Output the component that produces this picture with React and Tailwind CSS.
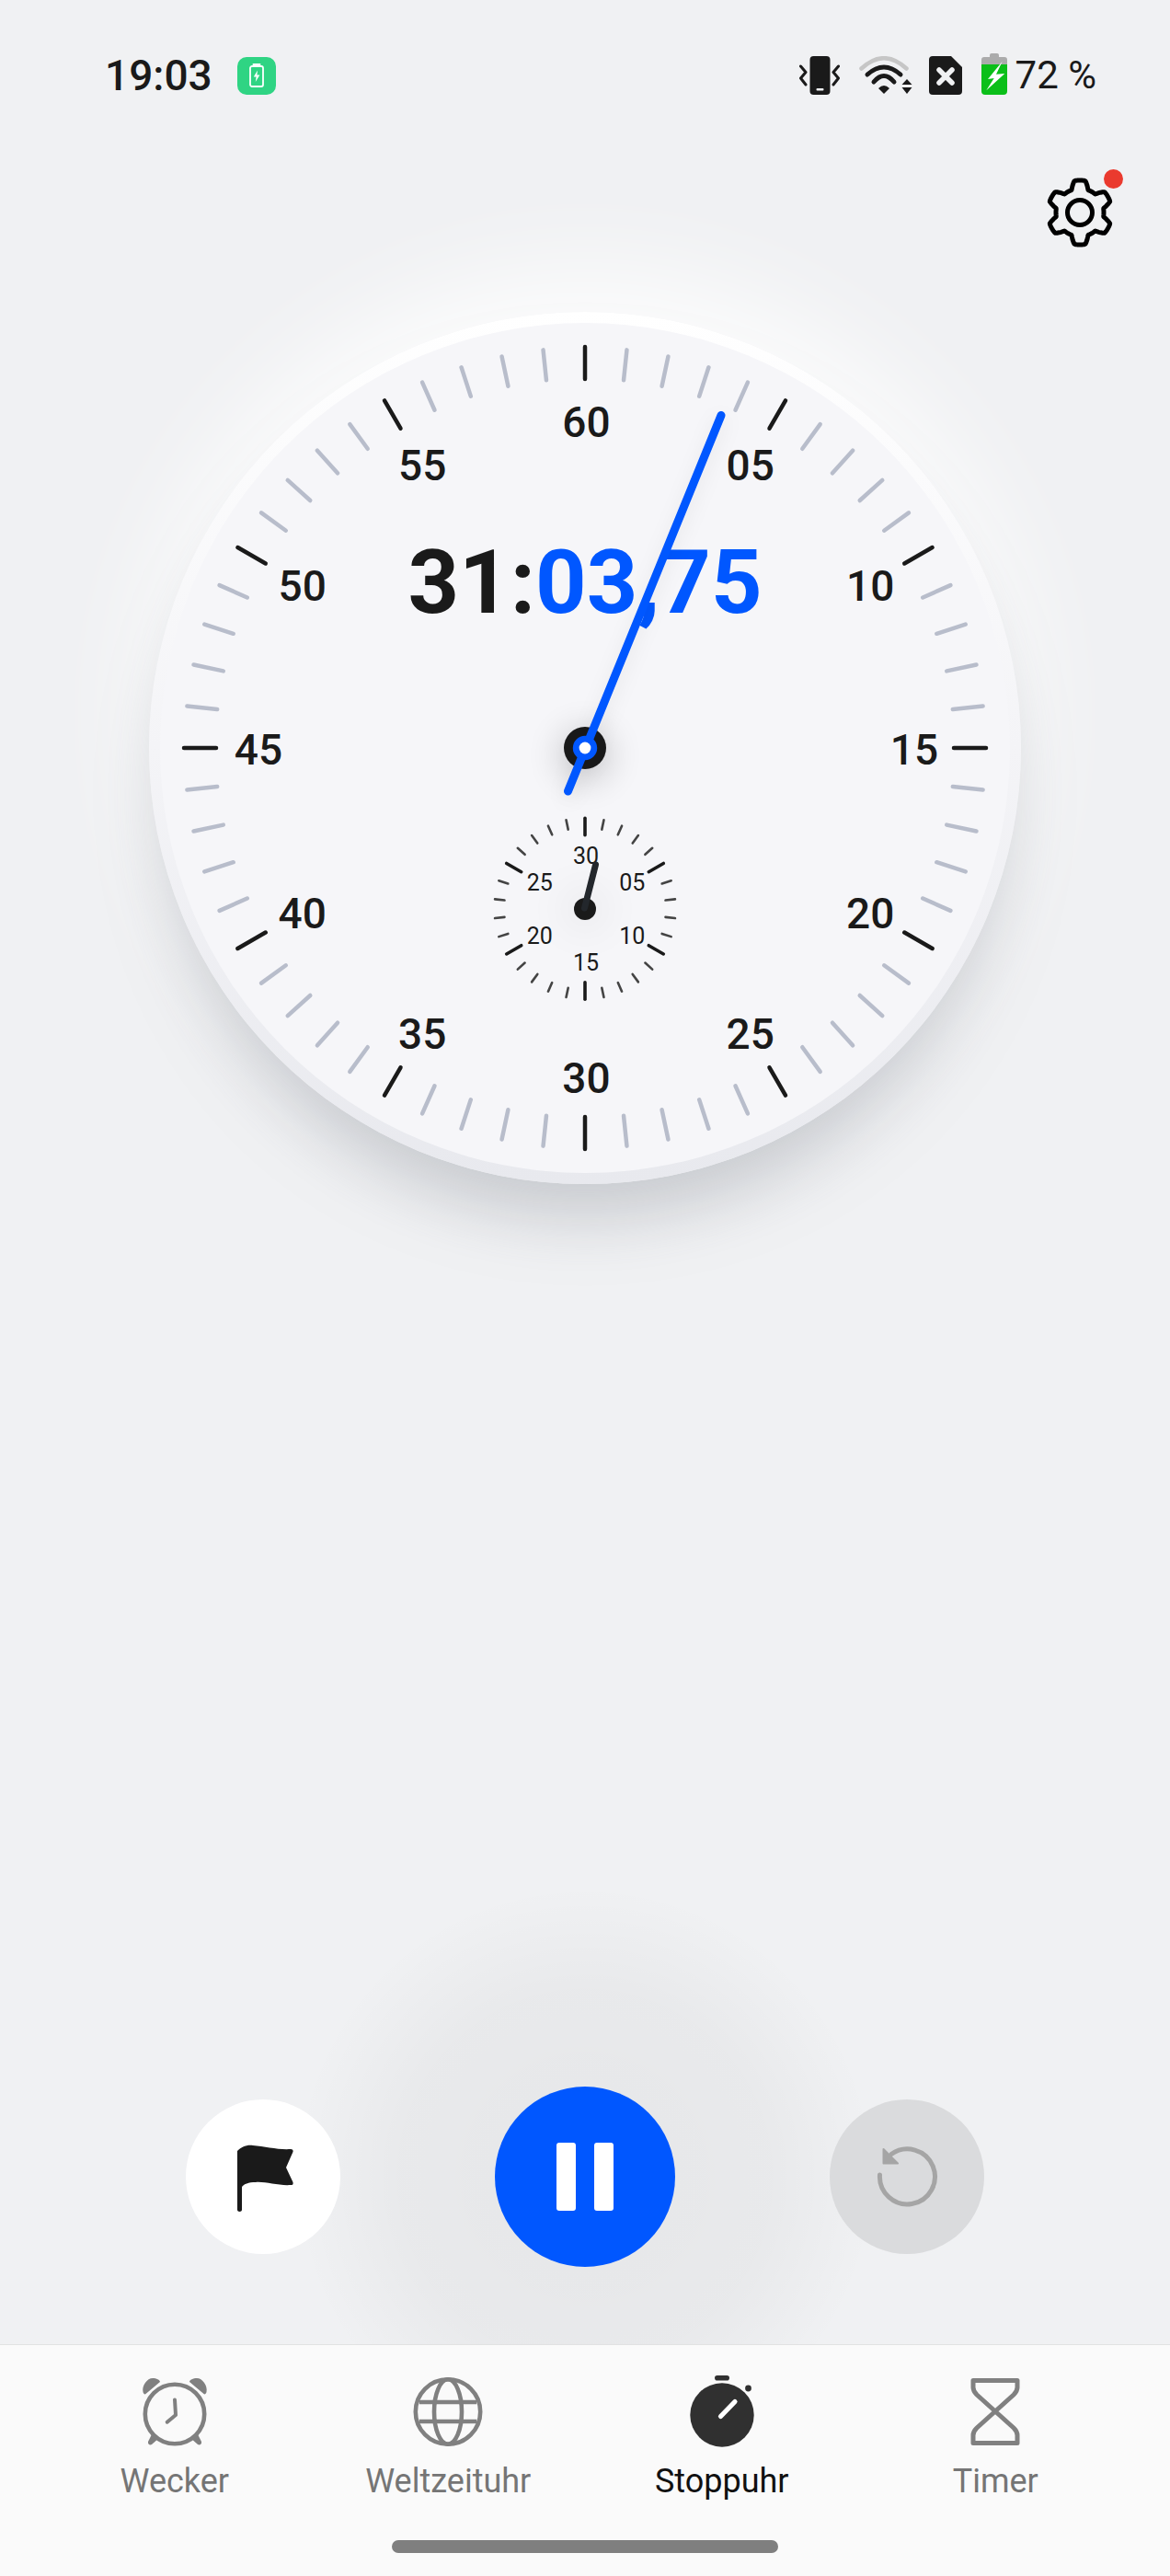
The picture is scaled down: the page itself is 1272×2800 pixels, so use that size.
import React from 'react'

const INK = '#1a1a1a'
const BLUE = '#0057ff'
const MUTED = '#808080'

// dial geometry, in dial-local pixels (948 box, hub at 474/474)
const C = 474
const SUB_Y = 648.7

function polar(cx, cy, r, deg) {
  const a = (deg * Math.PI) / 180
  return [cx + r * Math.sin(a), cy - r * Math.cos(a)]
}

const mainTicks = Array.from({ length: 60 }, (_, i) => {
  const major = i % 5 === 0
  const [x1, y1] = polar(C, C, major ? 401 : 402, i * 6)
  const [x2, y2] = polar(C, C, major ? 436 : 435, i * 6)
  return { x1, y1, x2, y2, major }
})

const subTicks = Array.from({ length: 30 }, (_, i) => {
  const major = i % 5 === 0
  const [x1, y1] = polar(C, SUB_Y, major ? 80 : 88, i * 12)
  const [x2, y2] = polar(C, SUB_Y, 98.5, i * 12)
  return { x1, y1, x2, y2, major }
})

const mainLabels = ['60', '05', '10', '15', '20', '25', '30', '35', '40', '45', '50', '55'].map((t, i) => {
  const [x, y] = polar(C + 1.5, C + 2, 356.5, i * 30)
  return { t, x, y }
})

const subLabels = ['30', '05', '10', '15', '20', '25'].map((t, i) => {
  const [x, y] = polar(C, SUB_Y, 58, i * 60)
  return { t, x, y }
})

function gearPath() {
  const pts = []
  for (let i = 0; i < 360; i += 2) {
    const a = (i * Math.PI) / 180
    const w = Math.max(-1, Math.min(1, Math.cos(6 * a + Math.PI) * -1.9))
    const r = 30.5 + 4.5 * w
    pts.push(`${(40 + r * Math.sin(a)).toFixed(2)} ${(40 - r * Math.cos(a)).toFixed(2)}`)
  }
  return `M${pts.join('L')}Z`
}

function GearIcon() {
  return (
    <svg width="80" height="80" viewBox="0 0 80 80" fill="none">
      <path d={gearPath()} stroke="#000" strokeWidth="5" strokeLinejoin="round" />
      <circle cx="40" cy="40" r="13.5" stroke="#000" strokeWidth="5" />
    </svg>
  )
}

function VibrateIcon() {
  return (
    <svg width="44" height="42" viewBox="0 0 44 42" fill="none">
      <rect x="11.5" y="0" width="22" height="42" rx="4" fill={INK} />
      <rect x="18.5" y="35" width="8" height="2.6" rx="1" fill="#f0f1f3" />
      <path d="M1.5 11 L7 17.5 L1.5 24 L7 31" stroke={INK} strokeWidth="3" strokeLinecap="round" strokeLinejoin="round" />
      <path d="M42.5 11 L37 17.5 L42.5 24 L37 31" stroke={INK} strokeWidth="3" strokeLinecap="round" strokeLinejoin="round" />
    </svg>
  )
}

function WifiIcon() {
  return (
    <svg width="59" height="42" viewBox="0 0 59 42" fill="none">
      <path d="M3.5 13.5 Q28 -9 52.5 13.5" stroke="#c6c6c6" strokeWidth="4.5" strokeLinecap="round" />
      <path d="M10 20 Q28 4 46 20" stroke={INK} strokeWidth="5" strokeLinecap="round" />
      <path d="M17 28 Q28 15 39 28" stroke={INK} strokeWidth="5" strokeLinecap="round" />
      <path d="M22 35 Q28 29 34 35 L28 41Z" fill={INK} />
      <path d="M47.5 31 L53 25 L58.5 31Z" fill={INK} />
      <path d="M47.5 34 H58.5 L53 41Z" fill={INK} />
    </svg>
  )
}

function SimIcon() {
  return (
    <svg width="36" height="42" viewBox="0 0 36 42" fill="none">
      <path d="M4 0 H24 L36 12 V38 A4 4 0 0 1 32 42 H4 A4 4 0 0 1 0 38 V4 A4 4 0 0 1 4 0Z" fill={INK} />
      <path d="M11 15 L25 29 M25 15 L11 29" stroke="#f0f1f3" strokeWidth="5.5" strokeLinecap="round" />
    </svg>
  )
}

function BatteryIcon() {
  return (
    <svg width="28" height="45" viewBox="0 0 28 45" fill="none">
      <path d="M3 4 H9 V2 A2 2 0 0 1 11 0 H17 A2 2 0 0 1 19 2 V4 H25 A3 3 0 0 1 28 7 V12 H0 V7 A3 3 0 0 1 3 4Z" fill="#ababab" />
      <path d="M0 12 H28 V41 A4 4 0 0 1 24 45 H4 A4 4 0 0 1 0 41Z" fill="#0bbf19" />
      <path d="M22.7 8.7 L7 28 L13.7 27 L5.3 40.3 L25.3 22 L16 22.7Z" fill="#fff" />
    </svg>
  )
}

function ChargeBadge() {
  return (
    <div className="w-[42px] h-[41px] rounded-[10px] bg-[#2fd483] flex items-center justify-center">
      <svg width="20" height="26" viewBox="0 0 20 26" fill="none">
        <path d="M6.5 1 H13.5" stroke="#fff" strokeWidth="2" strokeLinecap="round" />
        <rect x="3" y="3" width="14" height="22" rx="2" stroke="#fff" strokeWidth="1.8" />
        <path d="M11 7.5 L6.8 14.5 H9.6 L8.8 20 L13.4 12.5 H10.4Z" fill="#fff" />
      </svg>
    </div>
  )
}

function AlarmIcon() {
  return (
    <svg width="80" height="80" viewBox="0 0 80 80" fill="none">
      <g transform="translate(3 4)">
        <circle cx="37" cy="39" r="32.2" stroke={MUTED} strokeWidth="4.6" />
        <path d="M2.5 15 C1 8 7 0 13 0 C17 0 21 2 21 4 L5.5 17 C4.5 18 3 17 2.5 15Z" fill={MUTED} />
        <path d="M71.5 15 C73 8 67 0 61 0 C57 0 53 2 53 4 L68.5 17 C69.5 18 71 17 71.5 15Z" fill={MUTED} />
        <path d="M12 61 L8 69 C7.5 72 10 73 12 72 L20 65Z" fill={MUTED} />
        <path d="M62 61 L66 69 C66.5 72 64 73 62 72 L54 65Z" fill={MUTED} />
        <path d="M37 23.5 L38 40 L28.7 47.7" stroke={MUTED} strokeWidth="4" strokeLinecap="round" strokeLinejoin="round" />
      </g>
    </svg>
  )
}

function GlobeIcon() {
  return (
    <svg width="80" height="80" viewBox="0 0 80 80" fill="none" stroke={MUTED} strokeWidth="4.6">
      <circle cx="40" cy="40.5" r="35.2" />
      <ellipse cx="40" cy="40.5" rx="15" ry="35.2" />
      <path d="M9 30 H71 M9 51 H71" />
    </svg>
  )
}

function StopwatchIcon() {
  return (
    <svg width="80" height="80" viewBox="0 0 80 80" fill="none">
      <circle cx="40" cy="44" r="34.7" fill="#303030" />
      <rect x="32" y="1" width="16" height="5.6" rx="2.8" fill="#303030" />
      <circle cx="68.5" cy="15" r="3.4" fill="#303030" />
      <path d="M38.5 45.5 L54 29.5" stroke="#fff" strokeWidth="5.2" strokeLinecap="round" />
    </svg>
  )
}

function HourglassIcon() {
  return (
    <svg width="80" height="80" viewBox="0 0 80 80" fill="none">
      <path
        d="M16 6.5 H64 V14 C64 18 62 20 60 22 L20 58 C18 60 16 62 16 66 V74.5 H64 V66 C64 62 62 60 60 58 L20 22 C18 20 16 18 16 14Z"
        stroke={MUTED}
        strokeWidth="5"
        strokeLinejoin="round"
      />
    </svg>
  )
}

function FlagIcon() {
  return (
    <svg width="62" height="73" viewBox="0 0 62 73">
      <path
        d="M0 7 C4 3 10 0 17 1 C30 2 45 6 58 5 C60 5 61 6 60.5 8 L53 25 L60.5 41 C61 44 60 44 58 44 C45 45 30 40 20 41 C12 41 7 43 5 46 V71 C5 73.5 0 73.5 0 71Z"
        fill={INK}
      />
    </svg>
  )
}

function ResetIcon() {
  return (
    <svg width="70" height="70" viewBox="0 0 70 70" fill="none">
      <path d="M5.5 33 A30 30 0 1 0 18 10.5" stroke="#a5a5a5" strokeWidth="5" strokeLinecap="round" />
      <path d="M9.5 5 L25 20.5 H9.5Z" fill="#a5a5a5" stroke="#a5a5a5" strokeWidth="2" strokeLinejoin="round" />
    </svg>
  )
}

const tabs = [
  { label: 'Wecker', Icon: AlarmIcon },
  { label: 'Weltzeituhr', Icon: GlobeIcon },
  { label: 'Stoppuhr', Icon: StopwatchIcon, active: true },
  { label: 'Timer', Icon: HourglassIcon },
]

function Dial() {
  return (
    <div className="relative w-[948px] h-[948px] mx-auto mt-[68px] rounded-full bg-gradient-to-b from-white via-[#f4f4f7] to-[#e8e9ee] shadow-[0_50px_70px_-16px_rgba(120,125,135,0.36),0_-36px_110px_6px_rgba(255,255,255,0.85)] flex items-center justify-center">
      <div className="w-[924px] h-[924px] rounded-full bg-[#f6f6f9]" />

      <svg className="absolute inset-0" width="948" height="948" viewBox="0 0 948 948" fill="none">
        {mainTicks.map((t, i) => (
          <line key={i} x1={t.x1} y1={t.y1} x2={t.x2} y2={t.y2} stroke={t.major ? INK : '#b8bdcb'} strokeWidth="4.5" strokeLinecap="round" />
        ))}
        {subTicks.map((t, i) => (
          <line key={i} x1={t.x1} y1={t.y1} x2={t.x2} y2={t.y2} stroke={t.major ? INK : '#444'} strokeWidth={t.major ? 3.6 : 2.6} strokeLinecap="round" />
        ))}
      </svg>

      {mainLabels.map(l => (
        <span
          key={l.t}
          className="absolute -translate-x-1/2 -translate-y-1/2 text-[46px] leading-none font-[550] text-[#1a1a1a]"
          style={{ left: l.x, top: l.y }}
        >
          {l.t}
        </span>
      ))}
      {subLabels.map(l => (
        <span
          key={l.t}
          className="absolute -translate-x-1/2 -translate-y-1/2 text-[25px] leading-none text-[#1a1a1a]"
          style={{ left: l.x + 1, top: l.y }}
        >
          {l.t}
        </span>
      ))}

      {/* readout */}
      <div className="absolute left-0 right-0 top-[244px] h-[100px] flex items-center justify-center text-[97px] leading-none font-bold whitespace-nowrap">
        <span className="text-[#1a1a1a]">31:</span>
        <span className="text-[#0057ff]">03,75</span>
      </div>

      {/* small hand */}
      <div className="absolute left-[462px] top-[637px] w-6 h-6 rounded-full bg-[#1a1a1a] shadow-[0_0_46px_14px_rgba(0,0,0,0.05)]" />
      <svg className="absolute inset-0" width="948" height="948" viewBox="0 0 948 948" fill="none">
        <path d="M473.5 648 L485.5 601" stroke="#23272c" strokeWidth="7" strokeLinecap="round" />
      </svg>

      {/* main hand */}
      <div className="absolute left-[451px] top-[451px] w-[46px] h-[46px] rounded-full bg-[#1a1a1a] shadow-[0_8px_34px_8px_rgba(0,0,0,0.14)]" />
      <svg className="absolute inset-0 drop-shadow-[0_6px_10px_rgba(0,0,0,0.07)]" width="948" height="948" viewBox="0 0 948 948" fill="none">
        <path d="M455.5 521 L622 112.5" stroke={BLUE} strokeWidth="9" strokeLinecap="round" />
        <circle cx="474" cy="474" r="13.2" fill={BLUE} />
        <circle cx="474" cy="474" r="6.4" fill="#fff" />
      </svg>
    </div>
  )
}

export default function App() {
  return (
    <div className="relative w-full h-[2800px] overflow-hidden flex flex-col bg-[#f0f1f3] font-['Roboto',sans-serif]">
      {/* Status bar */}
      <div className="h-[164px] shrink-0 pl-[114px] pr-[80px] flex items-center justify-between text-[#1a1a1a]">
        <div className="flex items-center gap-[27px]">
          <span className="text-[46px] leading-none font-medium">19:03</span>
          <ChargeBadge />
        </div>
        <div className="flex items-center">
          <VibrateIcon />
          <div className="ml-5"><WifiIcon /></div>
          <div className="ml-[18px]"><SimIcon /></div>
          <div className="ml-[21px] -mt-[3px]"><BatteryIcon /></div>
          <span className="ml-[9px] text-[42px] leading-none">72 %</span>
        </div>
      </div>

      {/* Settings */}
      <div className="mt-[27px] h-20 shrink-0 pr-[58px] flex justify-end">
        <div className="relative w-20 h-20">
          <GearIcon />
          <span className="absolute right-[-7px] top-[-7px] w-[21px] h-[21px] rounded-full bg-[#ea3a2e]" />
        </div>
      </div>

      <Dial />

      <div className="flex-1" />

      {/* Controls */}
      <div className="relative mb-[84px] flex items-center justify-center gap-[168px]">
        {/* soft glow behind the pause button */}
        <div className="absolute left-1/2 top-1/2 -translate-x-1/2 -translate-y-1/2 w-[640px] h-[640px] rounded-full bg-[radial-gradient(circle,rgba(0,0,0,0.045)_0%,rgba(0,0,0,0.03)_45%,rgba(0,0,0,0)_70%)]" />
        <button className="relative w-[168px] h-[168px] rounded-full bg-white flex items-center justify-center">
          <span className="ml-[5px] mt-[2px]"><FlagIcon /></span>
        </button>
        <button className="relative w-[196px] h-[196px] rounded-full bg-[#0057ff] flex items-center justify-center gap-[20px]">
          <span className="w-[21px] h-[74px] rounded-[3px] bg-white" />
          <span className="w-[21px] h-[74px] rounded-[3px] bg-white" />
        </button>
        <button className="relative w-[168px] h-[168px] rounded-full bg-[#dadbdd] flex items-center justify-center">
          <ResetIcon />
        </button>
      </div>

      {/* Tab bar */}
      <div className="relative z-20 h-[252px] shrink-0 bg-[#fafafa] border-t border-[#e2e2e2] pt-[32px]">
        <div className="px-[41px] grid grid-cols-4">
          {tabs.map(({ label, Icon, active }) => (
            <div key={label} className="flex flex-col items-center">
              <Icon />
              <span className={`mt-[14px] text-[36px] leading-[44px] ${active ? 'text-[#111]' : 'text-[#757575]'}`}>{label}</span>
            </div>
          ))}
        </div>
        <div className="mx-auto mt-[42px] w-[420px] h-[14px] rounded-full bg-[#7f7f7f]" />
      </div>
    </div>
  )
}
